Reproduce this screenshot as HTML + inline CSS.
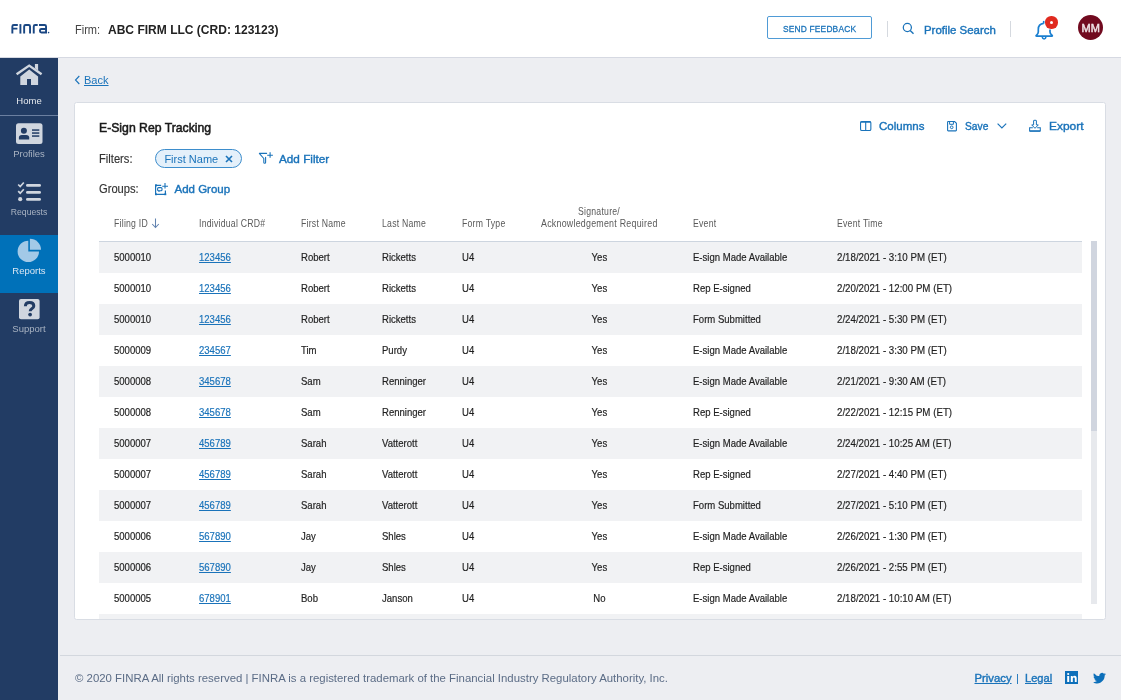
<!DOCTYPE html>
<html><head><meta charset="utf-8">
<style>
*{margin:0;padding:0;box-sizing:border-box}
html{background:#edeef2}
body{will-change:transform;
width:1121px;height:700px;overflow:hidden;font-family:"Liberation Sans",sans-serif;color:#222}
.a{position:absolute;white-space:nowrap}
.c{display:inline-block;transform-origin:0 50%}
#hdr{position:absolute;left:0;top:0;width:1121px;height:58px;background:#fff;border-bottom:1px solid #d6d9e2}
#side{position:absolute;left:0;top:58px;width:58px;height:642px;background:#223c64}
.navlbl{position:absolute;left:0;width:58px;text-align:center;font-size:9.5px;color:#a9b3c2}
#card{position:absolute;left:74px;top:102px;width:1032px;height:518px;background:#fff;border:1px solid #d9dde4;border-radius:2.5px;overflow:hidden}
.lnk{color:#1a73ba}
.th{position:absolute;top:217px;font-size:11px;color:#5a5a5a;line-height:12px;letter-spacing:0.3px}
.row{position:absolute;left:99px;width:983px;height:31px}
.row.s{background:#f1f2f4}
.td{position:absolute;font-size:11.5px;color:#1f1f1f;line-height:12px;-webkit-text-stroke:0.2px currentColor}
.td.lnk{color:#1a73ba}
.td span{display:inline-block;transform:scaleX(.83);transform-origin:0 50%}
.th span{display:inline-block;transform:scaleX(.79);transform-origin:0 50%}
</style></head><body>

<!-- HEADER -->
<div id="hdr"></div>
<svg class="a" style="left:10px;top:23px" width="42" height="12" viewBox="0 0 42 12">
  <g fill="none" stroke="#1a4783" stroke-width="1.9">
    <path d="M2.35 10.6V3.5Q2.35 2.05 3.8 2.05H7.8M2.35 5.65H7.4"/>
    <path d="M10.4 1.1V10.6"/>
    <path d="M14.15 10.6V3.5Q14.15 2.05 15.6 2.05H18.6Q20.05 2.05 20.05 3.5V10.6"/>
    <path d="M23.75 10.6V3.5Q23.75 2.05 25.2 2.05H27.7"/>
    <path d="M29 2.05H34.6Q36.05 2.05 36.05 3.5V9.55H31.4Q29.95 9.55 29.95 8.1V7.4Q29.95 6 31.4 6H36.05"/>
  </g>
  <circle cx="38.6" cy="9.6" r="0.8" fill="#1a4783"/>
</svg>
<div class="a" style="left:74.5px;top:21.5px;font-size:12px;color:#444;line-height:16px"><span class="c" style="transform:scaleX(.92)">Firm:</span></div>
<div class="a" style="left:108px;top:21.5px;font-size:12.6px;font-weight:bold;color:#222;line-height:16px"><span class="c" style="transform:scaleX(.955)">ABC FIRM LLC (CRD: 123123)</span></div>

<div class="a" style="left:767px;top:16px;width:105px;height:23px;border:1px solid #4f9bd6;border-radius:2px"></div>
<div class="a" style="left:783px;top:22.7px;font-size:9.6px;letter-spacing:0.2px;color:#1a73ba;line-height:12px"><span class="c" style="transform:scaleX(.875);-webkit-text-stroke:0.3px #1a73ba">SEND FEEDBACK</span></div>
<div class="a" style="left:887px;top:21px;width:1px;height:16px;background:#d5d9df"></div>
<svg class="a" style="left:902px;top:22px" width="13" height="13" viewBox="0 0 13 13"><circle cx="5.35" cy="5.5" r="4.05" fill="none" stroke="#1a73ba" stroke-width="1.25"/><path d="M8.2 8.4l3.3 3.3" stroke="#1a73ba" stroke-width="1.4"/></svg>
<div class="a" style="left:923.6px;top:23.2px;font-size:11.5px;color:#1a73ba;line-height:14px"><span class="c" style="transform:scaleX(.994);-webkit-text-stroke:0.4px currentColor">Profile Search</span></div>
<div class="a" style="left:1010px;top:21px;width:1px;height:16px;background:#d5d9df"></div>
<svg class="a" style="left:1034px;top:19px" width="22" height="23" viewBox="0 0 22 23">
  <path d="M9.7 4.4C6.3 4.7 4.3 7.1 4.3 10.4V13C4.3 14.5 3.4 15.3 2.5 16.2Q1.5 17.1 2.7 17.1H17.7Q18.9 17.1 17.9 16.2C16.9 15.3 16 14.4 16 13V10.5" fill="none" stroke="#1a7fd0" stroke-width="1.7" stroke-linejoin="round"/>
  <path d="M8.3 17.6Q8.3 19.9 10.1 19.9Q11.9 19.9 11.9 17.6" fill="none" stroke="#1a7fd0" stroke-width="1.5"/>
  <path d="M9.7 1.9V4.6" stroke="#1a7fd0" stroke-width="1.6"/>
</svg>
<div class="a" style="left:1045.3px;top:16.3px;width:12.4px;height:12.4px;border-radius:50%;background:#e02a1f"></div>
<div class="a" style="left:1049.8px;top:20.8px;width:3.4px;height:3.4px;border-radius:50%;background:#fff"></div>
<div class="a" style="left:1078px;top:15.2px;width:25px;height:25px;border-radius:50%;background:#710a1f"></div>
<div class="a" style="left:1078px;top:22px;width:25px;text-align:center;font-size:10.5px;color:#f0e4e7;line-height:12px"><span style="display:inline-block;transform:scaleX(1.05);-webkit-text-stroke:0.45px #f0e4e7">MM</span></div>

<!-- SIDEBAR -->
<div id="side"></div>
<div class="a" style="left:0;top:115px;width:58px;height:1px;background:#6b7fa0"></div>
<div class="a" style="left:0;top:234.5px;width:58px;height:58px;background:#0071b9"></div>
<!-- home -->
<svg class="a" style="left:14px;top:60px" width="30" height="28" viewBox="0 0 30 28">
  <path d="M2.6 14.3L15.2 5.6L27.6 14.3" fill="none" stroke="#d0d6df" stroke-width="2.4"/>
  <path d="M20.9 3.9H24.1V10.6L20.9 8.3z" fill="#d0d6df"/>
  <path d="M6.3 16.6L15.2 9.5L24.1 16.6V25H17V19H13V25H6.3Z" fill="#d0d6df"/>
</svg>
<div class="navlbl" style="top:95px;color:#e6e9ee;line-height:12px">Home</div>
<!-- profiles -->
<svg class="a" style="left:16px;top:123px" width="27" height="22" viewBox="0 0 27 22">
  <rect x="0" y="0.2" width="26.5" height="20.8" rx="2.5" fill="#d0d6df"/>
  <circle cx="7.9" cy="7.8" r="3" fill="#223c64"/>
  <path d="M2.9 16.6V14.6Q2.9 11.9 5.8 11.9H10.2Q13.2 11.9 13.2 14.6V16.6Z" fill="#223c64"/>
  <rect x="16" y="6.3" width="7.3" height="1.5" fill="#223c64"/>
  <rect x="16" y="9.3" width="7.3" height="1.5" fill="#223c64"/>
  <rect x="16" y="12.3" width="7.3" height="1.5" fill="#223c64"/>
</svg>
<div class="navlbl" style="top:148px;line-height:12px">Profiles</div>
<!-- requests -->
<svg class="a" style="left:17px;top:181px" width="25" height="22" viewBox="0 0 25 22">
  <path d="M1.2 3.5l2 2 3.6-4" fill="none" stroke="#d0d6df" stroke-width="1.7"/>
  <path d="M1.2 10.2l2 2 3.6-4" fill="none" stroke="#d0d6df" stroke-width="1.7"/>
  <circle cx="3.2" cy="18.2" r="2.1" fill="#d0d6df"/>
  <rect x="9" y="3" width="15" height="2.8" rx="1.4" fill="#d0d6df"/>
  <rect x="9" y="10" width="15" height="2.8" rx="1.4" fill="#d0d6df"/>
  <rect x="9" y="17" width="15" height="2.8" rx="1.4" fill="#d0d6df"/>
</svg>
<div class="navlbl" style="top:206px;line-height:12px"><span style="display:inline-block;transform:scaleX(.91)">Requests</span></div>
<!-- reports -->
<svg class="a" style="left:16px;top:236px" width="28" height="28" viewBox="0 0 28 28">
  <path d="M12.3 4.7A10.7 10.7 0 1 0 23 15.4H12.3Z" fill="#a3c9e7"/>
  <path d="M13.9 2.7A11.1 11.1 0 0 1 25 13.8H13.9Z" fill="#a3c9e7"/>
</svg>
<div class="navlbl" style="top:265px;color:#d9e6f3;line-height:12px">Reports</div>
<!-- support -->
<svg class="a" style="left:19px;top:299px" width="21" height="21" viewBox="0 0 21 21">
  <rect x="0" y="0" width="20.6" height="20.2" rx="2" fill="#d0d6df"/>
  <path d="M6.4 7.3C6.4 4.7 8.3 3.5 10.6 3.5C13 3.5 14.8 4.8 14.8 6.9C14.8 9.5 11.2 9.8 11.2 12.2" fill="none" stroke="#223c64" stroke-width="3"/>
  <circle cx="11.1" cy="15.6" r="1.9" fill="#223c64"/>
</svg>
<div class="navlbl" style="top:323px;line-height:12px">Support</div>

<!-- BACK -->
<svg class="a" style="left:74px;top:75px" width="7" height="10" viewBox="0 0 7 10"><path d="M5.3 1L1.5 5l3.8 4" fill="none" stroke="#1a73ba" stroke-width="1.1"/></svg>
<div class="a lnk" style="left:84px;top:73px;font-size:11.5px;line-height:14px"><span class="c" style="transform:scaleX(.96);text-decoration:underline">Back</span></div>

<!-- CARD -->
<div id="card"></div>
<div class="a" style="left:98.8px;top:120.2px;font-size:13px;line-height:16px;color:#1a1a1a"><span class="c" style="transform:scaleX(.94);-webkit-text-stroke:0.55px #1a1a1a">E-Sign Rep Tracking</span></div>

<svg class="a" style="left:859px;top:120px" width="13" height="12" viewBox="0 0 13 12"><rect x="1.55" y="1.55" width="10.3" height="9" rx="1.3" fill="none" stroke="#1a73ba" stroke-width="1.1"/><path d="M1.5 2.1h10.4" stroke="#1a73ba" stroke-width="1.3"/><path d="M6.7 1.5v9.2" stroke="#1a73ba" stroke-width="1.1"/></svg>
<div class="a lnk" style="left:879px;top:119.2px;font-size:11.5px;line-height:14px"><span class="c" style="transform:scaleX(1);-webkit-text-stroke:0.4px currentColor">Columns</span></div>
<svg class="a" style="left:946px;top:120px" width="12" height="12" viewBox="0 0 12 12"><path d="M1.6 2.1Q1.6 1.5 2.2 1.5H8.6L10.4 3.3V10.3Q10.4 10.9 9.8 10.9H2.2Q1.6 10.9 1.6 10.3Z" fill="none" stroke="#1a73ba" stroke-width="1.1"/><path d="M3.6 1.5V4.3H7.4V1.5" fill="none" stroke="#1a73ba" stroke-width="1"/><circle cx="5.7" cy="7.3" r="1.35" fill="none" stroke="#1a73ba" stroke-width="1"/></svg>
<div class="a lnk" style="left:964.5px;top:119.2px;font-size:11.5px;line-height:14px"><span class="c" style="transform:scaleX(.89);-webkit-text-stroke:0.4px currentColor">Save</span></div>
<svg class="a" style="left:996px;top:122px" width="12" height="8" viewBox="0 0 12 8"><path d="M1.6 1.6l4.3 4.4 4.3-4.4" fill="none" stroke="#1a73ba" stroke-width="1.15"/></svg>
<svg class="a" style="left:1028px;top:119px" width="14" height="14" viewBox="0 0 14 14"><path d="M5.6 1.7Q5.6 1.3 6 1.3H8Q8.4 1.3 8.4 1.7V5.9H10.3L7 9.3L3.7 5.9H5.6Z" fill="none" stroke="#1a73ba" stroke-width="1" stroke-linejoin="round"/><path d="M4.8 8.8H1.6V12Q1.6 12.3 1.9 12.3H12Q12.3 12.3 12.3 12V8.8H9.2" fill="none" stroke="#1a73ba" stroke-width="1.05"/><path d="M1.8 11.9H12.1" stroke="#1a73ba" stroke-width="1.3"/></svg>
<div class="a lnk" style="left:1049px;top:119.2px;font-size:11.5px;line-height:14px"><span class="c" style="transform:scaleX(1.04);-webkit-text-stroke:0.4px currentColor">Export</span></div>

<div class="a" style="left:99px;top:152px;font-size:12px;line-height:14px;color:#333"><span class="c" style="transform:scaleX(.93);-webkit-text-stroke:0.15px #333">Filters:</span></div>
<div class="a" style="left:155px;top:149px;width:87px;height:19px;border:1px solid #3d8dcc;border-radius:9.5px;background:#e4f0fa"></div>
<div class="a" style="left:164.4px;top:151.5px;font-size:11px;line-height:14px;color:#1a73ba"><span class="c" style="transform:scaleX(1)">First Name</span></div>
<svg class="a" style="left:225px;top:155px" width="8" height="8" viewBox="0 0 8 8"><path d="M1 1l6 6M7 1l-6 6" stroke="#1a73ba" stroke-width="1.6"/></svg>
<svg class="a" style="left:258px;top:151px" width="16" height="14" viewBox="0 0 16 14"><path d="M1.4 2.4H8.6M1.5 2.6L5.8 7.5V11.5Q5.8 12.3 6.7 12.3Q7.6 12.3 7.6 11.5V6.4" fill="none" stroke="#1a73ba" stroke-width="1.1" stroke-linecap="round" stroke-linejoin="round"/><path d="M12.1 1.3V6.7M9.2 4.3H14.9" stroke="#1a73ba" stroke-width="1.1"/></svg>
<div class="a lnk" style="left:278.5px;top:151.9px;font-size:11.5px;line-height:14px"><span class="c" style="transform:scaleX(1.02);-webkit-text-stroke:0.4px currentColor">Add Filter</span></div>

<div class="a" style="left:99px;top:182px;font-size:12px;line-height:14px;color:#333"><span class="c" style="transform:scaleX(.93);-webkit-text-stroke:0.15px #333">Groups:</span></div>
<svg class="a" style="left:154px;top:182px" width="16" height="14" viewBox="0 0 16 14"><path d="M1.6 2.8V12.3H11.4V8.6M1.4 3.4H7.2" fill="none" stroke="#1a73ba" stroke-width="1.2"/><rect x="1" y="2.4" width="2" height="2" fill="#1a73ba"/><rect x="1" y="11.4" width="2" height="1.8" fill="#1a73ba"/><rect x="10.3" y="11.4" width="2" height="1.8" fill="#1a73ba"/><rect x="3.6" y="5.6" width="4.4" height="3.1" rx="1" fill="none" stroke="#1a73ba" stroke-width="1.1"/><path d="M5 8.8V10" stroke="#1a73ba" stroke-width="1"/><path d="M11 1V6.5M8.2 4.3H14" stroke="#1a73ba" stroke-width="1.1"/></svg>
<div class="a lnk" style="left:174.5px;top:182.2px;font-size:11.5px;line-height:14px"><span class="c" style="transform:scaleX(1);-webkit-text-stroke:0.4px currentColor">Add Group</span></div>

<!-- TABLE HEADER -->
<div class="th" style="left:114px"><span>Filing ID</span></div>
<svg class="a" style="left:151px;top:217px" width="9" height="12" viewBox="0 0 9 12"><path d="M4.5 1.6v9M1.2 7l3.3 3.5 3.3-3.5" fill="none" stroke="#6283b0" stroke-width="1.05"/></svg>
<div class="th" style="left:199px"><span>Individual CRD#</span></div>
<div class="th" style="left:301px"><span>First Name</span></div>
<div class="th" style="left:382px"><span>Last Name</span></div>
<div class="th" style="left:462px"><span>Form Type</span></div>
<div class="th" style="left:578px;top:205px"><span>Signature/</span></div>
<div class="th" style="left:541px"><span style="transform:scaleX(.805)">Acknowledgement Required</span></div>
<div class="th" style="left:693px"><span>Event</span></div>
<div class="th" style="left:837px"><span>Event Time</span></div>
<div class="a" style="left:99px;top:241px;width:983px;height:1px;background:#cdd5df"></div>

<!-- ROWS -->
<!--ROWS-->
<div class="row s" style="top:242.00px;height:31.00px"></div>
<div class="td" style="left:114px;top:250.70px"><span>5000010</span></div>
<div class="td lnk" style="left:199px;top:250.70px"><span style="text-decoration:underline">123456</span></div>
<div class="td" style="left:301px;top:250.70px"><span>Robert</span></div>
<div class="td" style="left:382px;top:250.70px"><span>Ricketts</span></div>
<div class="td" style="left:462px;top:250.70px"><span>U4</span></div>
<div class="td" style="left:539px;width:120px;text-align:center;top:250.70px"><span style="transform-origin:50% 50%">Yes</span></div>
<div class="td" style="left:693px;top:250.70px"><span>E-sign Made Available</span></div>
<div class="td" style="left:837px;top:250.70px"><span style="transform:scaleX(.845)">2/18/2021 - 3:10 PM (ET)</span></div>
<div class="row" style="top:273.00px;height:31.00px"></div>
<div class="td" style="left:114px;top:281.70px"><span>5000010</span></div>
<div class="td lnk" style="left:199px;top:281.70px"><span style="text-decoration:underline">123456</span></div>
<div class="td" style="left:301px;top:281.70px"><span>Robert</span></div>
<div class="td" style="left:382px;top:281.70px"><span>Ricketts</span></div>
<div class="td" style="left:462px;top:281.70px"><span>U4</span></div>
<div class="td" style="left:539px;width:120px;text-align:center;top:281.70px"><span style="transform-origin:50% 50%">Yes</span></div>
<div class="td" style="left:693px;top:281.70px"><span>Rep E-signed</span></div>
<div class="td" style="left:837px;top:281.70px"><span style="transform:scaleX(.845)">2/20/2021 - 12:00 PM (ET)</span></div>
<div class="row s" style="top:304.00px;height:31.00px"></div>
<div class="td" style="left:114px;top:312.70px"><span>5000010</span></div>
<div class="td lnk" style="left:199px;top:312.70px"><span style="text-decoration:underline">123456</span></div>
<div class="td" style="left:301px;top:312.70px"><span>Robert</span></div>
<div class="td" style="left:382px;top:312.70px"><span>Ricketts</span></div>
<div class="td" style="left:462px;top:312.70px"><span>U4</span></div>
<div class="td" style="left:539px;width:120px;text-align:center;top:312.70px"><span style="transform-origin:50% 50%">Yes</span></div>
<div class="td" style="left:693px;top:312.70px"><span>Form Submitted</span></div>
<div class="td" style="left:837px;top:312.70px"><span style="transform:scaleX(.845)">2/24/2021 - 5:30 PM (ET)</span></div>
<div class="row" style="top:335.00px;height:31.00px"></div>
<div class="td" style="left:114px;top:343.70px"><span>5000009</span></div>
<div class="td lnk" style="left:199px;top:343.70px"><span style="text-decoration:underline">234567</span></div>
<div class="td" style="left:301px;top:343.70px"><span>Tim</span></div>
<div class="td" style="left:382px;top:343.70px"><span>Purdy</span></div>
<div class="td" style="left:462px;top:343.70px"><span>U4</span></div>
<div class="td" style="left:539px;width:120px;text-align:center;top:343.70px"><span style="transform-origin:50% 50%">Yes</span></div>
<div class="td" style="left:693px;top:343.70px"><span>E-sign Made Available</span></div>
<div class="td" style="left:837px;top:343.70px"><span style="transform:scaleX(.845)">2/18/2021 - 3:30 PM (ET)</span></div>
<div class="row s" style="top:366.00px;height:31.00px"></div>
<div class="td" style="left:114px;top:374.70px"><span>5000008</span></div>
<div class="td lnk" style="left:199px;top:374.70px"><span style="text-decoration:underline">345678</span></div>
<div class="td" style="left:301px;top:374.70px"><span>Sam</span></div>
<div class="td" style="left:382px;top:374.70px"><span>Renninger</span></div>
<div class="td" style="left:462px;top:374.70px"><span>U4</span></div>
<div class="td" style="left:539px;width:120px;text-align:center;top:374.70px"><span style="transform-origin:50% 50%">Yes</span></div>
<div class="td" style="left:693px;top:374.70px"><span>E-sign Made Available</span></div>
<div class="td" style="left:837px;top:374.70px"><span style="transform:scaleX(.845)">2/21/2021 - 9:30 AM (ET)</span></div>
<div class="row" style="top:397.00px;height:31.00px"></div>
<div class="td" style="left:114px;top:405.70px"><span>5000008</span></div>
<div class="td lnk" style="left:199px;top:405.70px"><span style="text-decoration:underline">345678</span></div>
<div class="td" style="left:301px;top:405.70px"><span>Sam</span></div>
<div class="td" style="left:382px;top:405.70px"><span>Renninger</span></div>
<div class="td" style="left:462px;top:405.70px"><span>U4</span></div>
<div class="td" style="left:539px;width:120px;text-align:center;top:405.70px"><span style="transform-origin:50% 50%">Yes</span></div>
<div class="td" style="left:693px;top:405.70px"><span>Rep E-signed</span></div>
<div class="td" style="left:837px;top:405.70px"><span style="transform:scaleX(.845)">2/22/2021 - 12:15 PM (ET)</span></div>
<div class="row s" style="top:428.00px;height:31.00px"></div>
<div class="td" style="left:114px;top:436.70px"><span>5000007</span></div>
<div class="td lnk" style="left:199px;top:436.70px"><span style="text-decoration:underline">456789</span></div>
<div class="td" style="left:301px;top:436.70px"><span>Sarah</span></div>
<div class="td" style="left:382px;top:436.70px"><span>Vatterott</span></div>
<div class="td" style="left:462px;top:436.70px"><span>U4</span></div>
<div class="td" style="left:539px;width:120px;text-align:center;top:436.70px"><span style="transform-origin:50% 50%">Yes</span></div>
<div class="td" style="left:693px;top:436.70px"><span>E-sign Made Available</span></div>
<div class="td" style="left:837px;top:436.70px"><span style="transform:scaleX(.845)">2/24/2021 - 10:25 AM (ET)</span></div>
<div class="row" style="top:459.00px;height:31.00px"></div>
<div class="td" style="left:114px;top:467.70px"><span>5000007</span></div>
<div class="td lnk" style="left:199px;top:467.70px"><span style="text-decoration:underline">456789</span></div>
<div class="td" style="left:301px;top:467.70px"><span>Sarah</span></div>
<div class="td" style="left:382px;top:467.70px"><span>Vatterott</span></div>
<div class="td" style="left:462px;top:467.70px"><span>U4</span></div>
<div class="td" style="left:539px;width:120px;text-align:center;top:467.70px"><span style="transform-origin:50% 50%">Yes</span></div>
<div class="td" style="left:693px;top:467.70px"><span>Rep E-signed</span></div>
<div class="td" style="left:837px;top:467.70px"><span style="transform:scaleX(.845)">2/27/2021 - 4:40 PM (ET)</span></div>
<div class="row s" style="top:490.00px;height:31.00px"></div>
<div class="td" style="left:114px;top:498.70px"><span>5000007</span></div>
<div class="td lnk" style="left:199px;top:498.70px"><span style="text-decoration:underline">456789</span></div>
<div class="td" style="left:301px;top:498.70px"><span>Sarah</span></div>
<div class="td" style="left:382px;top:498.70px"><span>Vatterott</span></div>
<div class="td" style="left:462px;top:498.70px"><span>U4</span></div>
<div class="td" style="left:539px;width:120px;text-align:center;top:498.70px"><span style="transform-origin:50% 50%">Yes</span></div>
<div class="td" style="left:693px;top:498.70px"><span>Form Submitted</span></div>
<div class="td" style="left:837px;top:498.70px"><span style="transform:scaleX(.845)">2/27/2021 - 5:10 PM (ET)</span></div>
<div class="row" style="top:521.00px;height:31.00px"></div>
<div class="td" style="left:114px;top:529.70px"><span>5000006</span></div>
<div class="td lnk" style="left:199px;top:529.70px"><span style="text-decoration:underline">567890</span></div>
<div class="td" style="left:301px;top:529.70px"><span>Jay</span></div>
<div class="td" style="left:382px;top:529.70px"><span>Shles</span></div>
<div class="td" style="left:462px;top:529.70px"><span>U4</span></div>
<div class="td" style="left:539px;width:120px;text-align:center;top:529.70px"><span style="transform-origin:50% 50%">Yes</span></div>
<div class="td" style="left:693px;top:529.70px"><span>E-sign Made Available</span></div>
<div class="td" style="left:837px;top:529.70px"><span style="transform:scaleX(.845)">2/26/2021 - 1:30 PM (ET)</span></div>
<div class="row s" style="top:552.00px;height:31.00px"></div>
<div class="td" style="left:114px;top:560.70px"><span>5000006</span></div>
<div class="td lnk" style="left:199px;top:560.70px"><span style="text-decoration:underline">567890</span></div>
<div class="td" style="left:301px;top:560.70px"><span>Jay</span></div>
<div class="td" style="left:382px;top:560.70px"><span>Shles</span></div>
<div class="td" style="left:462px;top:560.70px"><span>U4</span></div>
<div class="td" style="left:539px;width:120px;text-align:center;top:560.70px"><span style="transform-origin:50% 50%">Yes</span></div>
<div class="td" style="left:693px;top:560.70px"><span>Rep E-signed</span></div>
<div class="td" style="left:837px;top:560.70px"><span style="transform:scaleX(.845)">2/26/2021 - 2:55 PM (ET)</span></div>
<div class="row" style="top:583.00px;height:31.00px"></div>
<div class="td" style="left:114px;top:591.70px"><span>5000005</span></div>
<div class="td lnk" style="left:199px;top:591.70px"><span style="text-decoration:underline">678901</span></div>
<div class="td" style="left:301px;top:591.70px"><span>Bob</span></div>
<div class="td" style="left:382px;top:591.70px"><span>Janson</span></div>
<div class="td" style="left:462px;top:591.70px"><span>U4</span></div>
<div class="td" style="left:539px;width:120px;text-align:center;top:591.70px"><span style="transform-origin:50% 50%">No</span></div>
<div class="td" style="left:693px;top:591.70px"><span>E-sign Made Available</span></div>
<div class="td" style="left:837px;top:591.70px"><span style="transform:scaleX(.845)">2/18/2021 - 10:10 AM (ET)</span></div>
<div class="row s" style="top:614.00px;height:5.00px"></div>
<!--/ROWS-->

<!-- SCROLLBAR -->
<div class="a" style="left:1091px;top:241px;width:6px;height:363px;background:#e7e9ed"></div>
<div class="a" style="left:1091px;top:241px;width:6px;height:190px;background:#d0d5df"></div>

<!-- FOOTER -->
<div class="a" style="left:60px;top:655px;width:1061px;height:1px;background:#d3d7de"></div>
<div class="a" style="left:75px;top:671px;font-size:11.4px;line-height:14px;color:#5b6c86">© 2020 FINRA All rights reserved | FINRA is a registered trademark of the Financial Industry Regulatory Authority, Inc.</div>
<div class="a lnk" style="left:974.5px;top:670.5px;font-size:11.3px;line-height:14px"><span class="c" style="transform:scaleX(1.0);text-decoration:underline;-webkit-text-stroke:0.4px currentColor">Privacy</span></div>
<div class="a lnk" style="left:1016px;top:670.5px;font-size:11.3px;line-height:14px">|</div>
<div class="a lnk" style="left:1024.5px;top:670.5px;font-size:11.3px;line-height:14px"><span class="c" style="transform:scaleX(.98);text-decoration:underline;-webkit-text-stroke:0.4px currentColor">Legal</span></div>
<svg class="a" style="left:1065px;top:671px" width="13" height="13" viewBox="0 0 13 13"><rect width="13" height="13" fill="#0d6fba"/><rect x="2.2" y="5" width="2" height="6" fill="#fff"/><circle cx="3.2" cy="3" r="1.1" fill="#fff"/><path d="M5.8 5h1.9v.9c.4-.7 1.1-1.1 2-1.1 1.4 0 2 .9 2 2.5V11H9.8V7.6c0-.8-.3-1.2-.9-1.2-.7 0-1.1.5-1.1 1.3V11H5.8z" fill="#fff"/></svg>
<svg class="a" style="left:1093px;top:672px" width="13" height="12" viewBox="0 1.5 24 20.5"><path d="M23.953 4.57a10 10 0 01-2.825.775 4.958 4.958 0 002.163-2.723c-.951.555-2.005.959-3.127 1.184a4.92 4.92 0 00-8.384 4.482C7.69 8.095 4.067 6.13 1.64 3.162a4.822 4.822 0 00-.666 2.475c0 1.71.87 3.213 2.188 4.096a4.904 4.904 0 01-2.228-.616v.06a4.923 4.923 0 003.946 4.827 4.996 4.996 0 01-2.212.085 4.936 4.936 0 004.604 3.417 9.867 9.867 0 01-6.102 2.105c-.39 0-.779-.023-1.17-.067a13.995 13.995 0 007.557 2.209c9.053 0 13.998-7.496 13.998-13.985 0-.21 0-.42-.015-.63A9.935 9.935 0 0024 4.59z" fill="#0d6fba"/></svg>

</body></html>
